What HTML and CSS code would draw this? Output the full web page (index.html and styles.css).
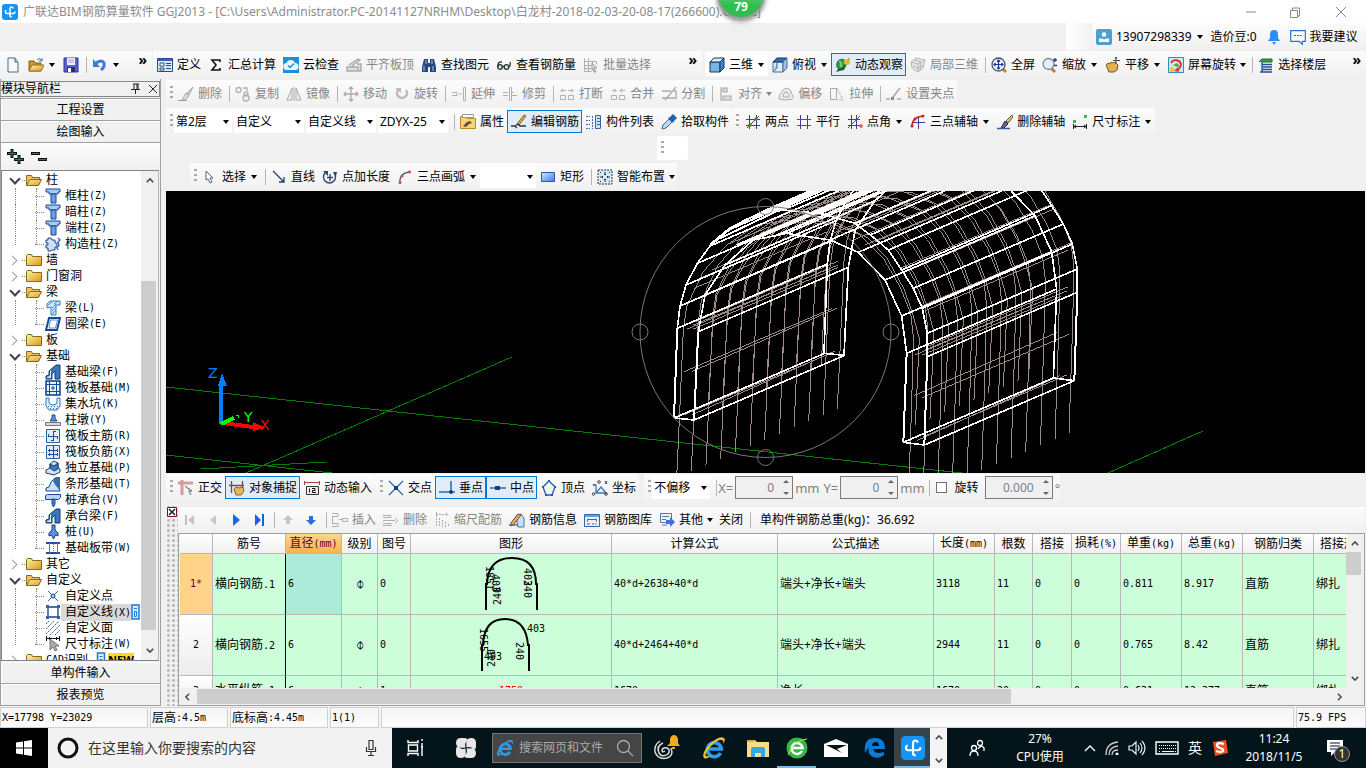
FILE: index.html
```html
<!DOCTYPE html>
<html lang="zh-CN">
<head>
<meta charset="utf-8">
<title>广联达BIM钢筋算量软件 GGJ2013</title>
<link rel="stylesheet" href="styles.css">
</head>
<body>
<svg class="sprite" aria-hidden="true">
<defs>
<linearGradient id="gy" x1="0" y1="0" x2="1" y2="1"><stop offset="0" stop-color="#fff3b0"/><stop offset="1" stop-color="#d99a1c"/></linearGradient>
<linearGradient id="gb" x1="0" y1="0" x2="1" y2="1"><stop offset="0" stop-color="#d4e6ff"/><stop offset="1" stop-color="#3f78e6"/></linearGradient>
</defs>
<symbol id="app" viewBox="0 0 16 16"><rect width="16" height="16" rx="3" fill="#1494f5"/><path d="M13 7.500q0 2-2 2H5q-1.700 0-1.700-1.700Q3.300 6.500 4.500 6.500M8 12.800V5Q8 3 9.700 3q1.300 0 1.300 1.500M8 11q0 2 1.800 2" fill="none" stroke="#fff" stroke-width="1.400"/></symbol>
<symbol id="new" viewBox="0 0 16 16"><path d="M3 1h7l3 4v10H3z" fill="#f6faff" stroke="#51667f"/><path d="M10 1v4h3" fill="#b9cbe0" stroke="#51667f"/></symbol>
<symbol id="open" viewBox="0 0 16 16"><path d="M1 14V4h5l1 2h6v8z" fill="#c9952c" stroke="#80611c"/><path d="M1 14l3-6h12l-3 6z" fill="url(#gy)" stroke="#94701e"/><path d="M9 3q3-3 5 1m0-3v3h-3" fill="none" stroke="#4a6f8c"/></symbol>
<symbol id="save" viewBox="0 0 16 16"><path d="M1 1h14v14H1z" fill="#5960d4" stroke="#2b328f"/><path d="M4 1h8v7H4z" fill="#f1f1ff"/><path d="M5 3h6M5 5h6" stroke="#9a9fd6"/><path d="M4 10h8v5H4z" fill="#28306d"/><path d="M5 11h3v4H5z" fill="#fff"/></symbol>
<symbol id="undo" viewBox="0 0 16 16"><path d="M4 6q6-4 8 0 1 4-3 7" fill="none" stroke="#3d7bd6" stroke-width="3"/><path d="M1 2v8h7z" fill="#3d7bd6"/></symbol>
<symbol id="define" viewBox="0 0 16 16"><path d="M.5 1.500h15v13H.5z" fill="#dbe8fb" stroke="#2b4a86"/><path d="M1 2h14v2H1z" fill="#3463b5"/><path d="M3 6h4v3H3zM3 11h4v2H3z" fill="#fff" stroke="#2b4a86"/><path d="M9 6.500h5M9 8.500h5M9 11.500h5" stroke="#2b4a86"/></symbol>
<symbol id="sigma" viewBox="0 0 16 16"><path d="M12 5V3H4l4 5-4 5h8v-2" fill="none" stroke="#111" stroke-width="1.600"/></symbol>
<symbol id="cloud" viewBox="0 0 16 16"><path d="M0 0h16v16H0z" fill="#1b8fd8"/><path d="M4 13a3.500 3.500 0 01-.5-7 4.500 4.500 0 018.500 0 3.500 3.500 0 010 7z" fill="#e9f7ff"/><path d="M5 8.500l2 2 4-4" fill="none" stroke="#1b8fd8" stroke-width="1.500"/></symbol>
<symbol id="slab" viewBox="0 0 16 16"><path d="M1 10h11v4H1zM3 8l9-6 2 1-8 6M11 7h4v7h-3" fill="#ddd" stroke="#aaa" stroke-width="1.400"/></symbol>
<symbol id="bino" viewBox="0 0 16 16"><path d="M3 2h4v4h2V2h4l2 8v5H9v-5H7v5H1v-5z" fill="#27477f"/><path d="M3 9v5M12 9v5M5 3v4M11 3v4" stroke="#9ec2ee"/></symbol>
<symbol id="glasses" viewBox="0 0 16 16"><g fill="#cfe3f5" stroke="#333" stroke-width="1.300"><circle cx="4" cy="10" r="2.300"/><circle cx="10.500" cy="10" r="2.300"/><path d="M6 9.500h2M1.500 10Q2 4 6 5M13 10q2-2 1-5" fill="none"/></g></symbol>
<symbol id="batch" viewBox="0 0 16 16"><path d="M1.500 1.500v13h7M1.500 4.500h12v3M1.500 8.500h7M1.500 11.500h7M5.500 1.500v13M9.500 4.500v4" fill="none" stroke="#b0b0b0"/><path d="M9 6l5 5h-3l2 4-2 0-1-3-1 1z" fill="#ddd" stroke="#999"/></symbol>
<symbol id="cube" viewBox="0 0 16 16"><path d="M1 5h10v10H1z" fill="#76b4e6" stroke="#18395f"/><path d="M1 5l4-4h10l-4 4z" fill="#d9edfb" stroke="#18395f"/><path d="M11 5l4-4v10l-4 4z" fill="#3f86c4" stroke="#18395f"/></symbol>
<symbol id="topv" viewBox="0 0 16 16"><path d="M1 5h10v10H1z" fill="#e2effa" stroke="#4b6b94"/><path d="M1 5l4-4h10l-4 4z" fill="#2f6fb8" stroke="#18395f"/><path d="M11 5l4-4v10l-4 4zM5 5v6l-4 4" fill="#9dc4ea" stroke="#4b6b94"/></symbol>
<symbol id="orbit" viewBox="0 0 16 16"><path d="M1 15Q8 3 15 1L9 13Q4 14 1 15z" fill="#245d39"/><ellipse cx="6" cy="7" rx="4" ry="5" transform="rotate(35 6 7)" fill="#33a14d" stroke="#176030"/><circle cx="12" cy="5" r="3" fill="#efb62c"/><path d="M4 4q3 1 2 6" stroke="#b9f1a8" fill="none"/></symbol>
<symbol id="part3" viewBox="0 0 16 16"><path d="M1 5l5-4 9 2-2 8-5 4-6-4zM1 5l7 2 7-4M8 7v8M4 3l7 2-1 8M3 9l6 2 5-3" fill="#e6e6e6" stroke="#b5b5b5"/></symbol>
<symbol id="full" viewBox="0 0 16 16"><path d="M11 11l4 4" stroke="#c1812c" stroke-width="3"/><circle cx="7.500" cy="7.500" r="6.500" fill="#edf4fc" stroke="#43536b" stroke-width="1.300"/><path d="M7.500 3v9M3 7.500h9M6 4.500L7.500 3 9 4.500M6 10.500L7.500 12 9 10.500M4.500 6L3 7.500 4.500 9M10.500 6L12 7.500 10.500 9" fill="none" stroke="#1f3a94" stroke-width="1.200"/></symbol>
<symbol id="zoom" viewBox="0 0 16 16"><path d="M9 11l4 4" stroke="#c1812c" stroke-width="3"/><circle cx="6.500" cy="7" r="5.500" fill="#dfeefa" stroke="#7c8795" stroke-width="1.300"/><path d="M13 1v4M11 3h4M12 8.500h3" stroke="#1f3a94" stroke-width="1.300"/></symbol>
<symbol id="pan" viewBox="0 0 16 16"><path d="M1 8l2-2 2 1 1-2 2 1 2-1 3 3-1 5-3 2H4z" fill="#e3b057" stroke="#7b5718"/><path d="M11 0v7M8 3.500h7M10 1.500L11 0l1 1.500" stroke="#444" fill="none"/></symbol>
<symbol id="rot" viewBox="0 0 16 16"><path d="M.5.500h15v15H.5z" fill="#c9ecf4" stroke="#2f8ec4"/><path d="M3 6a5.500 5.500 0 0110 1q0 4-4 6" fill="none" stroke="#e13030" stroke-width="1.800"/><path d="M6 14l4-4 1 5z" fill="#e13030"/><path d="M5 8l4-2 3 3-3 1z" fill="#55a843"/><circle cx="4" cy="12.500" r="2.500" fill="#f0c33a"/></symbol>
<symbol id="floor" viewBox="0 0 16 16"><path d="M1 5l3-3h10v3H4" fill="#3c9a45" stroke="#1c6c31"/><path d="M4 7.500h10M4 10h10M4 12.500h10M2 15h12M4 5v10" stroke="#1d4f96" stroke-width="1.300"/></symbol>
<symbol id="brushg" viewBox="0 0 16 16"><path d="M15 1L9 7l2 2z" fill="#ccc" stroke="#aaa"/><path d="M8 7l3 3-4 4H4z" fill="#ddd" stroke="#aaa"/><path d="M0 14.500h9" stroke="#999"/></symbol>
<symbol id="copy" viewBox="0 0 16 16"><g fill="none" stroke="#b0b0b0" stroke-width="1.300"><circle cx="3.500" cy="4" r="2.500"/><circle cx="11" cy="8" r="2"/><circle cx="11" cy="12" r="3"/><path d="M8 2h4v3"/></g></symbol>
<symbol id="mirror" viewBox="0 0 16 16"><path d="M6 2v12H1zM10 2v12h5z" fill="#eee" stroke="#aaa"/><path d="M8 1v14" stroke="#aaa"/></symbol>
<symbol id="move" viewBox="0 0 16 16"><path d="M8 1v14M1 8h14M6 3l2-2 2 2M6 13l2 2 2-2M3 6L1 8l2 2M13 6l2 2-2 2" fill="none" stroke="#aaa" stroke-width="1.300"/></symbol>
<symbol id="rotg" viewBox="0 0 16 16"><path d="M4 4a5 5 0 108 0" fill="none" stroke="#bbb" stroke-width="2.500"/><path d="M1 2h6v5z" fill="#bbb"/></symbol>
<symbol id="extend" viewBox="0 0 16 16"><path d="M1 6.500h5v3H1M8 8h3M12.500 1.500h2v13h-2z" fill="none" stroke="#b0b0b0"/></symbol>
<symbol id="trim" viewBox="0 0 16 16"><path d="M1 6.500h5M1 9.500h5M10 6.500h2M10 9.500h5M7.500 1v14M9.500 1v14" fill="none" stroke="#b0b0b0"/></symbol>
<symbol id="brk" viewBox="0 0 16 16"><path d="M1.500 9.500h5v4h-5zM9.500 9.500h5v4h-5zM2 4.500h5M4 2.500l-2 2 2 2M9 4.500h5M12 2.500l2 2-2 2" fill="none" stroke="#b0b0b0"/></symbol>
<symbol id="merge" viewBox="0 0 16 16"><path d="M1.500 9.500h5v4h-5zM9.500 9.500h5v4h-5zM2 4.500h4M4 2.500l2 2-2 2M10 4.500h5M12 2.500l-2 2 2 2" fill="none" stroke="#b0b0b0"/></symbol>
<symbol id="split" viewBox="0 0 16 16"><path d="M1 5h9M1 12h14V5h-2M15 1L4 14" fill="none" stroke="#aaa" stroke-width="1.300"/></symbol>
<symbol id="align" viewBox="0 0 16 16"><path d="M3 1v14M5 2h4v4H5zM5 10h8v4H5z" fill="#ddd" stroke="#aaa" stroke-width="1.200"/></symbol>
<symbol id="offset" viewBox="0 0 16 16"><path d="M1 13q0-5 3-7 2-5 7-3 3 2 2 4 4 4 1 6-6 2-13 0zM5 11q0-3 2-5h2q3 3 2 5z" fill="#eee" stroke="#aaa"/></symbol>
<symbol id="stretch" viewBox="0 0 16 16"><path d="M1.500 2.500h6v11h-6z" fill="none" stroke="#aaa"/><path d="M8 2l6 12H8" fill="none" stroke="#aaa" stroke-dasharray="2 1"/></symbol>
<symbol id="grip" viewBox="0 0 16 16"><path d="M0 13h4M11 13h4M14 2L7 11" stroke="#aaa" stroke-width="1.600"/><path d="M5 11h3v3H5z" fill="#888"/></symbol>
<symbol id="prop" viewBox="0 0 16 16"><path d="M.5 2.500h6l1 2h8v10H.5z" fill="#f8d377" stroke="#bd8a29"/><path d="M2.500.500h11v3h-11z" fill="#fff" stroke="#999"/><path d="M3 12l4-4 3-1 2 2-3 1-3 3z" fill="#5a5040"/></symbol>
<symbol id="edit" viewBox="0 0 16 16"><path d="M13 1l2 1-7 9-2-1z" fill="#e5ae54" stroke="#8c5428"/><path d="M0 12h4l3-2 2 2h6M4 12l2 2" fill="none" stroke="#333" stroke-width="1.300"/></symbol>
<symbol id="list" viewBox="0 0 16 16"><path d="M0 2.500h4M0 6.500h4M0 10.500h4M0 14.500h4M6.500 2v13" stroke="#3866a6" stroke-dasharray="2 1"/><path d="M9.500 1.500h5v13h-5z" fill="#cbdff5" stroke="#3866a6"/><path d="M11 4.500h3M11 7.500h3M11 10.500h3" stroke="#3866a6"/></symbol>
<symbol id="pick" viewBox="0 0 16 16"><path d="M1 15l1-4 6-6 3 3-6 6z" fill="#bcd8f2" stroke="#48678a"/><path d="M7 4l2-1 3-3 4 4-3 3-1 2z" fill="#2162ae"/></symbol>
<symbol id="two" viewBox="0 0 16 16"><path d="M4.500 1v14M11.500 1v14M1 5.500h14M1 11.500h14" stroke="#3e3e8e"/><path d="M2 14L14 2" stroke="#922"/><circle cx="5" cy="11" r="1.700" fill="#3a8c30"/><circle cx="11" cy="5" r="1.700" fill="#3a8c30"/></symbol>
<symbol id="par" viewBox="0 0 16 16"><path d="M4.500 1v14M11.500 1v14" stroke="#3e3e8e"/><path d="M1 5.500h14M1 11.500h14" stroke="#c23"/></symbol>
<symbol id="ang" viewBox="0 0 16 16"><path d="M4.500 1v14M9.500 1v14M1 5.500h12M1 11.500h12" stroke="#3e3e8e"/><path d="M1 14L13 2" stroke="#c22"/><circle cx="14" cy="12" r="1.300" fill="#fff" stroke="#c22"/></symbol>
<symbol id="aux3" viewBox="0 0 16 16"><path d="M8.500 3v12M3 8.500h12" stroke="#3e3e8e"/><path d="M2 12Q2 3 13 2" fill="none" stroke="#c22" stroke-width="1.400"/><g fill="#c22"><circle cx="2" cy="12" r="1.500"/><circle cx="5" cy="5" r="1.500"/><circle cx="13" cy="2" r="1.500"/></g></symbol>
<symbol id="brush" viewBox="0 0 16 16"><path d="M15 1L9 7l2 2 5-6z" fill="#e7c26b" stroke="#555"/><path d="M8 7l3 3-4 4H4z" fill="#765693" stroke="#333"/><path d="M0 14.500h13" stroke="#335b9e" stroke-width="1.500"/></symbol>
<symbol id="dim" viewBox="0 0 16 16"><path d="M1.500 10v5M14.500 10v5M2 12.500h12M4 11l-2 1.500 2 1.500M12 11l2 1.500-2 1.500" fill="none" stroke="#222"/><path d="M1 6h3v3H1zM12 1h3v3h-3z" fill="#4caf50"/></symbol>
<symbol id="cur" viewBox="0 0 16 16"><path d="M4 2v9l2-1 2 4 2-1-2-4h3z" fill="#fff" stroke="#4f6688"/></symbol>
<symbol id="line" viewBox="0 0 16 16"><path d="M2 2l11 11M13 8v5H8" fill="none" stroke="#1d3f72" stroke-width="1.300"/></symbol>
<symbol id="len" viewBox="0 0 16 16"><path d="M3 4a6 6 0 109 0M8 5v7M5 8.500h6" fill="none" stroke="#28456f" stroke-width="1.400"/><path d="M1 2h5v5M15 3l-4 0 3 4z" fill="#28456f"/></symbol>
<symbol id="arc" viewBox="0 0 16 16"><path d="M3 14Q2 4 13 3" fill="none" stroke="#36598f" stroke-width="1.300"/><g fill="#d94a3a"><circle cx="3" cy="13.500" r="1.500"/><circle cx="5" cy="7" r="1.500"/><circle cx="12.500" cy="3" r="1.500"/></g></symbol>
<symbol id="rect" viewBox="0 0 16 16"><path d="M1.500 3.500h13v9h-13z" fill="url(#gb)" stroke="#2a56b5"/></symbol>
<symbol id="smart" viewBox="0 0 16 16"><path d="M1 1h14v14H1z" fill="#d8e9f6" stroke="#333" stroke-dasharray="2 1"/><path d="M8 3v3M8 10v3M3 8h3M10 8h3M7 5l1 1 1-1M7 11l1-1 1 1M5 7l1 1-1 1M11 7l-1 1 1 1M3 3l1 1M13 3l-1 1M3 13l1-1M13 13l-1-1" fill="none" stroke="#234"/></symbol>
<symbol id="user" viewBox="0 0 16 16"><rect width="16" height="16" rx="2" fill="#4aa0cf"/><circle cx="8" cy="5.500" r="2.300" fill="#fff"/><path d="M3 13V9.500h3l2 1 2-1h3V13z" fill="#fff"/></symbol>
<symbol id="bell" viewBox="0 0 16 16"><path d="M2 12l2-3V5q0-4 4-4t4 4v4l2 3zM6 13h4l-2 3z" fill="#2f8cf0"/></symbol>
<symbol id="chat" viewBox="0 0 16 16"><path d="M.700 1.700h14.600v10.600h-3v3l-3-3H.700z" fill="#fff" stroke="#2b6ed2" stroke-width="1.200"/><path d="M4 6.500h8" stroke="#2b6ed2" stroke-dasharray="2 1"/></symbol>
<symbol id="ortho" viewBox="0 0 16 16"><path d="M0 3h15M4 0v15" stroke="#d89a9c" stroke-width="3"/><path d="M7 6l7 5-3 0 2 4" fill="#cdd5de" stroke="#667"/></symbol>
<symbol id="snap" viewBox="0 0 16 16"><path d="M2.500 1v12M13.500 1v7M0 5.500h15" stroke="#8a4141" stroke-width="1.300"/><path d="M5 9l2-2 3 1 4-1 1 4-3 4H7z" fill="#e5b75d" stroke="#86652a"/></symbol>
<symbol id="dyn" viewBox="0 0 16 16"><path d="M.5 1v4M15.500 1v4M0 2.500h16" stroke="#a44"/><path d="M2.500 6.500h12v8h-12z" fill="#eee" stroke="#333"/><path d="M5.500 8.500v4M8 8.500h3v2H8.500v2H12" fill="none" stroke="#111"/></symbol>
<symbol id="cross" viewBox="0 0 16 16"><path d="M1 1l14 14M15 1L1 15" stroke="#2d68b2" stroke-width="1.300"/><path d="M6 6h4v4H6z" fill="#143e79"/></symbol>
<symbol id="perp" viewBox="0 0 16 16"><path d="M0 12h16M12 1v11" stroke="#2d68b2" stroke-width="1.500"/><circle cx="12" cy="12" r="2" fill="#143e79"/></symbol>
<symbol id="mid" viewBox="0 0 16 16"><path d="M0 8h16" stroke="#2d68b2" stroke-width="1.500"/><path d="M5 6h5v4H5z" fill="#143e79"/></symbol>
<symbol id="vert" viewBox="0 0 16 16"><path d="M8 1l6 6-3 8H5L2 7z" fill="none" stroke="#1d5ca8" stroke-width="1.300"/><path d="M7 0h2v2H7zM1 6h2v2H1zM13 6h2v2h-2zM4 14h2v2H4zM10 14h2v2h-2z" fill="#1d5ca8"/></symbol>
<symbol id="coord" viewBox="0 0 16 16"><path d="M4 4v9h11M4 13l5-6 5 6" fill="none" stroke="#3378b9" stroke-width="1.300"/><g fill="none" stroke="#444"><circle cx="7" cy="2" r="1.300"/><circle cx="1.500" cy="14" r="1.300"/><circle cx="14" cy="14" r="1.300"/><path d="M1 4l1 2 1-2M13 4l2-3M13 1l2 3"/></g></symbol>
<symbol id="first" viewBox="0 0 16 16"><path d="M3 3h2v10H3zM12 3v10L6 8z" fill="#bfc3c8"/></symbol>
<symbol id="prev" viewBox="0 0 16 16"><path d="M11 3v10L5 8z" fill="#c5c8cc"/></symbol>
<symbol id="next" viewBox="0 0 16 16"><path d="M5 2v12l7-6z" fill="#1b67e0"/></symbol>
<symbol id="last" viewBox="0 0 16 16"><path d="M4 2v12l6-6zM11 2h2v12h-2z" fill="#1b62d6"/></symbol>
<symbol id="up" viewBox="0 0 16 16"><path d="M8 3l5 5h-3v4H6V8H3z" fill="#c3c5c8"/></symbol>
<symbol id="down" viewBox="0 0 16 16"><path d="M8 13l5-5h-3V4H6v4H3z" fill="#2c6be2"/></symbol>
<symbol id="ins" viewBox="0 0 16 16"><path d="M0 1.500h6v3H0M0 11.500h6v3H0M.5 4v7M7 7.500h3M10.500 6.500h5v3h-5z" fill="none" stroke="#b0b0b0"/></symbol>
<symbol id="del" viewBox="0 0 16 16"><path d="M0 3.500h8v2H0M0 11.500h8v2H0M0 8.500h12M12 6l3 2.500-3 2.500" fill="none" stroke="#b0b0b0"/></symbol>
<symbol id="scale" viewBox="0 0 16 16"><path d="M2 2.500h12M12 .5l2 2-2 2M2.500 0v15M5.500 6v9M8.500 8v7M11.500 10v5M14.500 12v3" fill="none" stroke="#aaa" stroke-dasharray="2 1"/></symbol>
<symbol id="info" viewBox="0 0 16 16"><path d="M0 13h10" fill="none" stroke="#4272a8" stroke-width="1.500"/><path d="M7 4l5-2 3 4v9H9z" fill="#cbe0f5" stroke="#4272a8"/><path d="M2 11l7-9 3 1-7 9-3 2z" fill="#e5b35e" stroke="#813d2b"/></symbol>
<symbol id="lib" viewBox="0 0 16 16"><path d="M.5 2.500h15v12H.5z" fill="#e7f0fb" stroke="#3766a5"/><path d="M1 3h14v2H1z" fill="#6a99d6"/><path d="M3.500 9.500v-2h9v2M3 12h3M8 12h2" fill="none" stroke="#3766a5"/><path d="M11 12h2" stroke="#dc5a3a"/></symbol>
<symbol id="other" viewBox="0 0 16 16"><path d="M1.500 1.500h11v9h-11z" fill="#eef4fd" stroke="#5579a8"/><path d="M3 4.500h7M3 7.500h4M3 13h5" stroke="#5579a8"/><path d="M7 8h4V5l5 5-5 5v-3H7z" fill="#3e74da"/></symbol>
<symbol id="fo" viewBox="0 0 16 16"><path d="M.5 13.500V3.500h5l1 2h7v2" fill="#f3c457" stroke="#8d6716"/><path d="M.5 13.500l3.500-6h11.500l-3 6z" fill="url(#gy)" stroke="#8d6716"/></symbol>
<symbol id="fc" viewBox="0 0 16 16"><path d="M.5 13.500V3.500l1-1h4l1 2h9v9z" fill="url(#gy)" stroke="#8d6716"/></symbol>
<symbol id="col" viewBox="0 0 16 16"><path d="M1 1h14v3h-2v2H4V4H1z" fill="#a9c9f1" stroke="#184792"/><path d="M6 6h5v9H6z" fill="#67a0e5" stroke="#184792"/></symbol>
<symbol id="gear" viewBox="0 0 16 16"><path d="M3 2h3l1 2h3v3h2v4h-2v3H7l-1 1H3v-3H1V9h2V7H1V4h2z" fill="#cce0f8" stroke="#184792"/><path d="M13 2l2 2-2 2 1 3-2 3 1 2" fill="none" stroke="#4272b8" stroke-width="1.500"/></symbol>
<symbol id="beam" viewBox="0 0 16 16"><path d="M2 4l3-3h10v4h-4v10H6V7L2 8z" fill="#cfe4fb" stroke="#2f7cc8"/><path d="M7 8l4-4M7 11l4-4M7 14l4-4M3 5l4-3M9 4l4-3" stroke="#4d8ad0"/></symbol>
<symbol id="ring" viewBox="0 0 16 16"><path d="M4 2h11l-3 12H1z" fill="none" stroke="#184792" stroke-width="2"/><path d="M5.500 4h7l-2 8H4z" fill="#fff" stroke="#5990d9"/></symbol>
<symbol id="fb" viewBox="0 0 16 16"><path d="M1 15v-3l3-1V7l7-6h4v14h-5V7L7 10v5z" fill="#3d76b8" stroke="#123a6d"/><path d="M2 14v-1l3-1V7l1-1v8z" fill="#d5e9fb"/></symbol>
<symbol id="raft" viewBox="0 0 16 16"><path d="M1 1h14v14H1z" fill="#e6f0fd" stroke="#0d3d7e" stroke-width="1.500"/><path d="M4.500 4.500h7v7h-7zM1 4.500h14M1 11.500h14M4.500 1v14M11.500 1v14M7 7h2v2H7z" fill="none" stroke="#194b92"/></symbol>
<symbol id="pit" viewBox="0 0 16 16"><path d="M1 2h3v4q0 3 4 3t4-3V2h3v8l-3 4H4L1 10z" fill="#dfeefd" stroke="#3a72b8"/><path d="M3 10.500h10M5 12.500h7" stroke="#3a72b8" stroke-dasharray="1 2"/></symbol>
<symbol id="pier" viewBox="0 0 16 16"><path d="M.5 10.500h15v3H.5z" fill="#d9d9d9" stroke="#777"/><path d="M7 3h3v3l2 3H5l2-3z" fill="#5d95dd" stroke="#184792"/></symbol>
<symbol id="mainr" viewBox="0 0 16 16"><path d="M1.500 1.500h13v13h-13z" fill="#dceafb" stroke="#2a5fae"/><path d="M8.500 4v8M3.500 8.500h9M3.500 9V6M12.500 8v3M8 3.500h3M6 12.500h3" fill="none" stroke="#1c4c9a"/></symbol>
<symbol id="negr" viewBox="0 0 16 16"><path d="M1.500 1.500h13v13h-13z" fill="#dceafb" stroke="#2a5fae"/><path d="M8.500 2v12M3 6.500h10M3 10.500h10M4.500 5v3M12.500 5v3M4.500 9v3M12.500 9v3" fill="none" stroke="#1c4c9a"/></symbol>
<symbol id="iso" viewBox="0 0 16 16"><path d="M1 10l4-2V4l4-3 4 2v5l2 1v3l-6 3-8-2z" fill="#cde2fa" stroke="#18406f"/><path d="M5 4l4 2 4-3v6L9 11 5 8z" fill="#3f78b8" stroke="#18406f"/></symbol>
<symbol id="strip" viewBox="0 0 16 16"><path d="M1 15v-3l3-1 2-5 4-4h4v10l1 3z" fill="#c9e1fa" stroke="#174d91"/><path d="M8 5l3-4h4v13l-4-4z" fill="#356da8"/></symbol>
<symbol id="cap" viewBox="0 0 16 16"><path d="M.5 3.500l2-1h13v3l-2 2H.5z" fill="#b9d6f8" stroke="#184792"/><path d="M7 7h3v5l-1.500 3L7 12z" fill="#427fc8" stroke="#184792"/></symbol>
<symbol id="pile" viewBox="0 0 16 16"><path d="M7 1h3v5l3 3v3l-2-1-1 1-1.500 3L7 12l-1-1-2 1V9l3-3z" fill="#5593df" stroke="#153d78"/></symbol>
<symbol id="band" viewBox="0 0 16 16"><path d="M1 3h14M1 13h14" stroke="#1d4fa2" stroke-width="2"/><path d="M4.500 3v10M12.500 3v10" stroke="#4f7fc9"/><path d="M8.500 4v8" stroke="#4f7fc9" stroke-dasharray="1 1"/></symbol>
<symbol id="pt" viewBox="0 0 16 16"><path d="M3 3l10 10M13 3L3 13" stroke="#2a62b8"/><circle cx="8" cy="8" r="2" fill="#a9d0ef" stroke="#123f83"/></symbol>
<symbol id="poly" viewBox="0 0 16 16"><path d="M3 3h10v10H3z" fill="none" stroke="#173e88" stroke-width="1.300"/><path d="M1 1h3v3H1zM12 1h3v3h-3zM1 12h3v3H1zM12 12h3v3h-3z" fill="#2c62b7"/></symbol>
<symbol id="hatch" viewBox="0 0 16 16"><path d="M1 4l3-3M1 9l8-8M1 14L14 1M5 15L15 5M10 15l5-5" stroke="#2b58a8" stroke-dasharray="2 1"/></symbol>
<symbol id="dimc" viewBox="0 0 16 16"><path d="M1.500 0v5M14.500 0v5M2 2.500h12M4.500 1v3M11.500 1v3" stroke="#111" fill="none"/><path d="M5 3v11l3-3 2 4 2-1-2-4h4z" fill="#aaa" stroke="#777"/></symbol>
<symbol id="book" viewBox="0 0 9 16"><path d="M1 1h7v14H1z" fill="#d7edff" stroke="#1c78d2" stroke-width="1.500"/><path d="M3 4.500h3M3.500 7.500h2v5h-2z" fill="none" stroke="#1c78d2"/></symbol>
<symbol id="ie" viewBox="0 0 24 24"><path d="M18.500 17a7 7 0 11.800-4H7" fill="none" stroke="#2d9be8" stroke-width="3.600"/><path d="M2 22Q-1 18 7 9 17-1 22 2q2 2-1 6 1-4-1-4-5-1-12 7-6 8-4 9 2 1 6-1-6 5-8 3z" fill="#f1bd3a"/></symbol>
<symbol id="ieb" viewBox="0 0 24 24"><path d="M18.500 17a7 7 0 11.800-4H7" fill="none" stroke="#2d9be8" stroke-width="3.600"/><path d="M2 22Q-1 18 7 9 17-1 22 2q2 2-1 6 1-4-1-4-5-1-12 7-6 8-4 9 2 1 6-1-6 5-8 3z" fill="#2d9be8"/></symbol>
</svg>

<header class="title">
<svg class="i"><use href="#app"/></svg><h1>广联达BIM钢筋算量软件 GGJ2013 - [C:\Users\Administrator.PC-20141127NRHM\Desktop\白龙村-2018-02-03-20-08-17(266600).GGJ12]</h1>
<span class="ball">79</span>
<svg class="wins" viewBox="0 0 120 20"><path d="M8 10h10M52.500 8.500h7v7h-7zM54.500 8v-2h7v8h-2M98 5l10 10M108 5L98 15" fill="none" stroke="#888"/></svg>
</header>
<div class="menurow">
<div class="bar blank"></div>
<div class="bar account"><button><svg class="i"><use href="#user"/></svg>13907298339<i class="ar wide"></i></button><button>造价豆:0</button><button class="bellb" aria-label="通知"><svg class="i"><use href="#bell"/></svg></button><button><svg class="i"><use href="#chat"/></svg>我要建议</button></div>
</div>
<div class="row top">
<div class="bar std"><button aria-label="新建"><svg class="i"><use href="#new"/></svg></button><button aria-label="打开"><svg class="i"><use href="#open"/></svg><i class="ar wide"></i></button><button aria-label="保存"><svg class="i"><use href="#save"/></svg></button><i class="sep"></i><button aria-label="撤销"><svg class="i"><use href="#undo"/></svg><i class="ar wide"></i></button><b class="more">»</b></div>
<div class="bar calc"><button><svg class="i"><use href="#define"/></svg>定义</button><button><svg class="i"><use href="#sigma"/></svg>汇总计算</button><button><svg class="i"><use href="#cloud"/></svg>云检查</button><button disabled><svg class="i"><use href="#slab"/></svg>平齐板顶</button><button><svg class="i"><use href="#bino"/></svg>查找图元</button><button><svg class="i"><use href="#glasses"/></svg>查看钢筋量</button><button disabled><svg class="i"><use href="#batch"/></svg>批量选择</button><b class="more">»</b></div>
<div class="bar view"><span class="field"><button><svg class="i"><use href="#cube"/></svg>三维<i class="ar wide"></i></button></span><button><svg class="i"><use href="#topv"/></svg>俯视<i class="ar wide"></i></button><button class="on"><svg class="i"><use href="#orbit"/></svg>动态观察</button><button disabled><svg class="i"><use href="#part3"/></svg>局部三维</button><i class="sep"></i><button><svg class="i"><use href="#full"/></svg>全屏</button><button><svg class="i"><use href="#zoom"/></svg>缩放<i class="ar wide"></i></button><button><svg class="i"><use href="#pan"/></svg>平移<i class="ar wide"></i></button><button><svg class="i"><use href="#rot"/></svg>屏幕旋转<i class="ar"></i></button><i class="sep"></i><button><svg class="i"><use href="#floor"/></svg>选择楼层</button><b class="more">»</b></div>
</div>

<main>
<aside>
<div class="phead"><h2>模块导航栏</h2><svg viewBox="0 0 30 14"><path d="M4 2h6M5 2v5M9 2v5M8 2v5M2 7.500h9M6.500 7v5M20 3l8 8M28 3l-8 8" fill="none" stroke="#222"/></svg></div>
<button class="nav">工程设置</button><button class="nav">绘图输入</button>
<div class="ptools"><svg viewBox="0 0 44 20"><path d="M7 2v9M2 6.500h10M14 8v9M9 12.500h10" stroke="#111" stroke-width="3"/><path d="M7 3v7M3 6.500h8M14 9v7M10 12.500h8" stroke="#0d8583"/><path d="M26 6.500h9M33 12.500h9" stroke="#111" stroke-width="3"/><path d="M27 6.500h7M34 12.500h7" stroke="#0d8583"/></svg></div>
<div class="treebox">
<ul class="tree">
<li class="g o"><svg class="i"><use href="#fo"/></svg>柱</li>
<li><svg class="i"><use href="#col"/></svg>框柱<span class="m">(Z)</span></li>
<li><svg class="i"><use href="#col"/></svg>暗柱<span class="m">(Z)</span></li>
<li><svg class="i"><use href="#col"/></svg>端柱<span class="m">(Z)</span></li>
<li class="end"><svg class="i"><use href="#gear"/></svg>构造柱<span class="m">(Z)</span></li>
<li class="g"><svg class="i"><use href="#fc"/></svg>墙</li>
<li class="g"><svg class="i"><use href="#fc"/></svg>门窗洞</li>
<li class="g o"><svg class="i"><use href="#fo"/></svg>梁</li>
<li><svg class="i"><use href="#beam"/></svg>梁<span class="m">(L)</span></li>
<li class="end"><svg class="i"><use href="#ring"/></svg>圈梁<span class="m">(E)</span></li>
<li class="g"><svg class="i"><use href="#fc"/></svg>板</li>
<li class="g o"><svg class="i"><use href="#fo"/></svg>基础</li>
<li><svg class="i"><use href="#fb"/></svg>基础梁<span class="m">(F)</span></li>
<li><svg class="i"><use href="#raft"/></svg>筏板基础<span class="m">(M)</span></li>
<li><svg class="i"><use href="#pit"/></svg>集水坑<span class="m">(K)</span></li>
<li><svg class="i"><use href="#pier"/></svg>柱墩<span class="m">(Y)</span></li>
<li><svg class="i"><use href="#mainr"/></svg>筏板主筋<span class="m">(R)</span></li>
<li><svg class="i"><use href="#negr"/></svg>筏板负筋<span class="m">(X)</span></li>
<li><svg class="i"><use href="#iso"/></svg>独立基础<span class="m">(P)</span></li>
<li><svg class="i"><use href="#strip"/></svg>条形基础<span class="m">(T)</span></li>
<li><svg class="i"><use href="#cap"/></svg>桩承台<span class="m">(V)</span></li>
<li><svg class="i"><use href="#fb"/></svg>承台梁<span class="m">(F)</span></li>
<li><svg class="i"><use href="#pile"/></svg>桩<span class="m">(U)</span></li>
<li class="end"><svg class="i"><use href="#band"/></svg>基础板带<span class="m">(W)</span></li>
<li class="g"><svg class="i"><use href="#fc"/></svg>其它</li>
<li class="g o"><svg class="i"><use href="#fo"/></svg>自定义</li>
<li><svg class="i"><use href="#pt"/></svg>自定义点</li>
<li class="sel"><svg class="i"><use href="#poly"/></svg><span class="lab">自定义线<span class="m">(X)</span></span><svg class="bk"><use href="#book"/></svg></li>
<li><svg class="i"><use href="#hatch"/></svg>自定义面</li>
<li class="end"><svg class="i"><use href="#dimc"/></svg>尺寸标注<span class="m">(W)</span></li>
<li class="g"><svg class="i"><use href="#fc"/></svg><span class="m">CAD</span>识别<svg class="bk cadbk"><use href="#book"/></svg><b class="newtag">NEW</b></li>
</ul>
<div class="vs"><svg viewBox="0 0 10 6"><path d="M1 5l4-4 4 4"/></svg><i class="thumb"></i><svg viewBox="0 0 10 6"><path d="M1 1l4 4 4-4"/></svg></div>
</div>
<button class="nav">单构件输入</button><button class="nav">报表预览</button>
</aside>

<section class="work">
<div class="row"><div class="bar"><i class="hd"></i><button disabled><svg class="i"><use href="#brushg"/></svg>删除</button><i class="sep"></i><button disabled><svg class="i"><use href="#copy"/></svg>复制</button><button disabled><svg class="i"><use href="#mirror"/></svg>镜像</button><i class="sep"></i><button disabled><svg class="i"><use href="#move"/></svg>移动</button><button disabled><svg class="i"><use href="#rotg"/></svg>旋转</button><i class="sep"></i><button disabled><svg class="i"><use href="#extend"/></svg>延伸</button><button disabled><svg class="i"><use href="#trim"/></svg>修剪</button><i class="sep"></i><button disabled><svg class="i"><use href="#brk"/></svg>打断</button><button disabled><svg class="i"><use href="#merge"/></svg>合并</button><button disabled><svg class="i"><use href="#split"/></svg>分割</button><i class="sep"></i><button disabled><svg class="i"><use href="#align"/></svg>对齐<i class="ar"></i></button><button disabled><svg class="i"><use href="#offset"/></svg>偏移</button><button disabled><svg class="i"><use href="#stretch"/></svg>拉伸</button><i class="sep"></i><button disabled><svg class="i"><use href="#grip"/></svg>设置夹点</button></div></div>
<div class="row"><div class="bar"><i class="hd"></i><label class="combo c58"><select aria-label="楼层"><option>第2层</option></select></label><label class="combo"><select aria-label="构件类型"><option>自定义</option></select></label><label class="combo"><select aria-label="构件"><option>自定义线</option></select></label><label class="combo"><select aria-label="名称"><option>ZDYX-25</option></select></label><i class="sep"></i><button><svg class="i"><use href="#prop"/></svg>属性</button><button class="on"><svg class="i"><use href="#edit"/></svg>编辑钢筋</button><button><svg class="i"><use href="#list"/></svg>构件列表</button><button><svg class="i"><use href="#pick"/></svg>拾取构件</button></div><div class="bar"><i class="hd axis"></i><button><svg class="i"><use href="#two"/></svg>两点</button><button><svg class="i"><use href="#par"/></svg>平行</button><button><svg class="i"><use href="#ang"/></svg>点角<i class="ar wide"></i></button><button><svg class="i"><use href="#aux3"/></svg>三点辅轴<i class="ar wide"></i></button><button><svg class="i"><use href="#brush"/></svg>删除辅轴</button><button><svg class="i"><use href="#dim"/></svg>尺寸标注<i class="ar wide"></i></button></div></div>
<div class="row"><div class="bar mini"><i class="hd"></i></div></div>
<div class="row last"><div class="bar draw"><i class="hd"></i><button><svg class="i"><use href="#cur"/></svg>选择<i class="ar wide"></i></button><i class="sep"></i><button><svg class="i"><use href="#line"/></svg>直线</button><button><svg class="i"><use href="#len"/></svg>点加长度</button><button><svg class="i"><use href="#arc"/></svg>三点画弧<i class="ar wide"></i></button><label class="combo c55"><select aria-label="画弧方式"><option></option></select></label><button><svg class="i"><use href="#rect"/></svg>矩形</button><i class="sep"></i><button><svg class="i"><use href="#smart"/></svg>智能布置<i class="ar"></i></button></div></div>

<svg class="scene" viewBox="166 191 1199 282" role="img" aria-label="三维视图">
<g stroke="#008000" fill="none" shape-rendering="crispEdges"><path d="M166 387L962 473M246 473L512 357M166 455L332 473M201 469L326 462M1108 473L1203 431"/></g>
<g fill="none" shape-rendering="crispEdges" transform="translate(620 190) scale(.33333)">
<g stroke="#9c8b85" stroke-width="3">
<defs>
<path id="bar1" d="M170 862L178 690 190 420 200 350 250 245 320 165 410 105 500 90 620 95 720 135 790 205 840 290 872 370 880 440 875 640 865 935"/>
<path id="bar2" d="M228 690L232 600 242 420 255 330 290 262 345 190 420 130 500 112 620 117 710 160 765 220 815 310 840 380 862 460 850 720"/>
</defs>
<use href="#bar1"/><use href="#bar1" x="44" y="-19"/><use href="#bar1" x="88" y="-38"/><use href="#bar1" x="132" y="-56"/><use href="#bar1" x="176" y="-75"/><use href="#bar1" x="220" y="-94"/><use href="#bar1" x="264" y="-113"/><use href="#bar1" x="308" y="-131"/><use href="#bar1" x="352" y="-150"/><use href="#bar1" x="396" y="-169"/><use href="#bar1" x="440" y="-188"/><use href="#bar1" x="482" y="-206"/>
<use href="#bar2" x="36" y="-15"/><use href="#bar2" x="80" y="-34"/><use href="#bar2" x="124" y="-53"/><use href="#bar2" x="168" y="-72"/><use href="#bar2" x="212" y="-91"/><use href="#bar2" x="256" y="-110"/><use href="#bar2" x="300" y="-129"/><use href="#bar2" x="344" y="-148"/><use href="#bar2" x="376" y="-162"/>
<path d="M192 545l445-190M215 545l435-190M200 418l420-180M218 418l437-186M220 405l435-180M225 395l430-182M190 675l430-180M215 675l430-192M222 295l400-170M275 240l500-213M240 265l450-192M330 160l450-190M420 130l450-190M450 105l400-170M520 90l400-170M560 100l450-190M620 97l450-190M640 130l450-190M680 120l450-190M700 150l450-190M735 165l450-190M765 155l450-190M840 235l450-190M850 248l450-190M905 348l450-190M915 362l430-182M885 495l450-190M907 495l415-175M915 480l425-177M920 470l425-180M882 617l430-190M907 623l440-190M890 752l430-195M910 740l430-185"/>
</g>
<g stroke="#fff" stroke-width="5">
<defs>
<path id="outer" d="M162 684L172 415 180 348 198 285 232 220 270 168 330 118 400 78 490 60 600 70 705 100 760 142 805 180 845 240 880 295 907 355 922 430 922 500 913 765"/>
<path id="inner" d="M222 690L235 425 255 315 315 225 400 150 500 130 630 150 715 187 795 270 845 378 860 490 850 757"/>
</defs>
<use href="#outer"/><use href="#inner"/><use href="#outer" x="450" y="-193"/><use href="#inner" x="450" y="-193"/>
<path stroke-width="6" d="M162 684L172 415M222 690L235 425M860 490L850 757M922 500L913 765M1372 307L1363 572"/>
<path d="M162 684l60 6M612 490l61 6M850 757l63 8M1300 564l63 8M162 684l450-193M222 690l450-193M172 415l450-193M235 425l450-193M180 348l450-193M198 285l450-193M232 220l450-193M255 315l375-162M270 168l450-193M315 225l450-193M330 118l450-193M400 78l450-193M400 150l450-193M490 60l450-193M500 130l450-193M600 70l450-193M630 150l450-193M705 100l450-193M715 187l450-193M750 135l450-193M795 270l450-193M805 180l450-193M845 240l450-193M845 378l450-193M860 490l450-193M880 295l450-193M907 355l450-193M922 430l450-193M922 500l450-193M850 757l450-193M913 765l450-193"/>
<path d="M270 164L330 114 430 64 590-6M330 118L610-6M365 95L640-24M405 84L640-18M430 74L680-36M470 62L700-40M300 145L540 30M350 165L720 6M405 145L780-18M460 140L780 4" stroke-width="6"/>
</g>
</g>
<g fill="none" stroke="#777"><circle cx="765.500" cy="332" r="125.500"/><circle cx="765.500" cy="206.500" r="8"/><circle cx="640" cy="332" r="8"/><circle cx="891" cy="332" r="8"/><circle cx="765.500" cy="457.500" r="8"/></g>
<g fill="none" shape-rendering="crispEdges"><path d="M221 424V386" stroke="#0080ff" stroke-width="4"/><path d="M222 373l5 13h-9z" fill="#0080ff"/><path d="M222 423l31 4" stroke="red" stroke-width="4"/><path d="M253 422l13 6-13 3z" fill="red"/><path d="M221 424l13-6" stroke="#0f0" stroke-width="4"/><path d="M236 415h2v3" stroke="#0f0"/></g>
<g class="axes"><text x="208" y="378" fill="#0080ff">Z</text><text x="244" y="422" fill="#0f0">Y</text><text x="260" y="430" fill="#f00">X</text></g>
</svg>

<div class="row snapbar"><div class="bar"><i class="hd"></i><button><svg class="i"><use href="#ortho"/></svg>正交</button><button class="on"><svg class="i"><use href="#snap"/></svg>对象捕捉</button><button><svg class="i"><use href="#dyn"/></svg>动态输入</button></div><div class="bar"><i class="hd s2"></i><button><svg class="i"><use href="#cross"/></svg>交点</button><button class="on"><svg class="i"><use href="#perp"/></svg>垂点</button><button class="on"><svg class="i"><use href="#mid"/></svg>中点</button><button><svg class="i"><use href="#vert"/></svg>顶点</button><button><svg class="i"><use href="#coord"/></svg>坐标</button></div><div class="bar offs"><i class="hd"></i><label class="combo c58"><select aria-label="偏移方式"><option>不偏移</option></select></label><i class="sep"></i><label class="num">X=<input value="0" disabled><span class="spin"></span>mm</label><label class="num">Y=<input value="0" disabled><span class="spin"></span>mm</label><i class="sep"></i><label class="chk"><input type="checkbox">旋转</label><label class="num deg"><input aria-label="角度" value="0.000" disabled><span class="spin"></span>°</label></div></div>

<div class="detail">
<div class="grip"><svg viewBox="0 0 10 10"><path d="M.5.500h9v9h-9z" fill="#fff" stroke="#712"/><path d="M2 2l6 6M8 2L2 8" stroke="#222" stroke-width="1.500"/></svg></div>
<div class="dmain">
<div class="bar dtools"><button disabled aria-label="首行"><svg class="i"><use href="#first"/></svg></button><button disabled aria-label="上一行"><svg class="i"><use href="#prev"/></svg></button><button aria-label="下一行"><svg class="i"><use href="#next"/></svg></button><button aria-label="末行"><svg class="i"><use href="#last"/></svg></button><i class="sep"></i><button disabled aria-label="上移"><svg class="i"><use href="#up"/></svg></button><button aria-label="下移"><svg class="i"><use href="#down"/></svg></button><i class="sep"></i><button disabled><svg class="i"><use href="#ins"/></svg>插入</button><button disabled><svg class="i"><use href="#del"/></svg>删除</button><button disabled><svg class="i"><use href="#scale"/></svg>缩尺配筋</button><button><svg class="i"><use href="#info"/></svg>钢筋信息</button><button><svg class="i"><use href="#lib"/></svg>钢筋图库</button><button><svg class="i"><use href="#other"/></svg>其他<i class="ar"></i></button><button>关闭</button><i class="sep"></i><span class="total">单构件钢筋总重(kg)：36.692</span></div>
<div class="grid">
<div class="gbody">
<table>
<colgroup><col class="w33"><col class="w73"><col class="w56"><col class="w36"><col class="w33"><col class="w201"><col class="w166"><col class="w156"><col class="w61"><col class="w38"><col class="w39"><col class="w49"><col class="w61"><col class="w61"><col class="w71"><col class="w61"></colgroup>
<thead><tr><th></th><th>筋号</th><th class="hot">直径<span class="m">(mm)</span></th><th>级别</th><th>图号</th><th>图形</th><th>计算公式</th><th>公式描述</th><th>长度<span class="m">(mm)</span></th><th>根数</th><th>搭接</th><th>损耗<span class="m">(%)</span></th><th>单重<span class="m">(kg)</span></th><th>总重<span class="m">(kg)</span></th><th>钢筋归类</th><th>搭接形式</th></tr></thead>
<tbody>
<tr><th class="hot m" scope="row">1*</th><td class="k">横向钢筋<span class="m">.1</span></td><td class="act m">6</td><td class="c">⌽</td><td class="m">0</td><td class="fig"><svg viewBox="0 0 200 60"><path d="M75 56V30h1q1-26 25-26t24 26h1v26" fill="none" stroke="#000" stroke-width="2"/><g><text transform="translate(75 12) rotate(90)">1851</text><text transform="translate(81 20) rotate(90)">403</text><text transform="translate(90 51) rotate(-90)">240</text><text transform="translate(113 14) rotate(90)">403</text><text transform="translate(113 26) rotate(90)">240</text></g></svg></td><td class="m">40*d+2638+40*d</td><td>端头+净长+端头</td><td class="m">3118</td><td class="m">11</td><td class="m">0</td><td class="m">0</td><td class="m">0.811</td><td class="m">8.917</td><td>直筋</td><td>绑扎</td></tr>
<tr><th class="m" scope="row">2</th><td class="k">横向钢筋<span class="m">.2</span></td><td class="m">6</td><td class="c">⌽</td><td class="m">0</td><td class="fig"><svg viewBox="0 0 200 60"><path d="M71 56V30h1q1-26 22-26t23 26h1v26" fill="none" stroke="#000" stroke-width="2"/><g><text transform="translate(69 13) rotate(90)">1655</text><text x="116" y="17">403</text><text x="73" y="45">403</text><text transform="translate(84 52) rotate(-90)">240</text><text transform="translate(105 27) rotate(90)">240</text></g></svg></td><td class="m">40*d+2464+40*d</td><td>端头+净长+端头</td><td class="m">2944</td><td class="m">11</td><td class="m">0</td><td class="m">0</td><td class="m">0.765</td><td class="m">8.42</td><td>直筋</td><td>绑扎</td></tr>
<tr class="short"><th class="m" scope="row">3</th><td class="k">水平纵筋<span class="m">.1</span></td><td class="m">6</td><td class="c">⌽</td><td class="m">1</td><td class="m red">1750</td><td class="m">1670</td><td>净长</td><td class="m">1670</td><td class="m">20</td><td class="m">0</td><td class="m">0</td><td class="m">0.631</td><td class="m">12.377</td><td>直筋</td><td>绑扎</td></tr>
</tbody>
</table>
<div class="vs"><svg viewBox="0 0 10 6"><path d="M1 5l4-4 4 4"/></svg><i class="thumb t2"></i><svg viewBox="0 0 10 6"><path d="M1 1l4 4 4-4"/></svg></div>
</div>
<div class="hs"><svg viewBox="0 0 6 10"><path d="M5 1L1 5l4 4"/></svg><i></i><svg viewBox="0 0 6 10"><path d="M1 1l4 4-4 4"/></svg></div>
</div>
</div>
</div>
</section>
</main>

<footer class="status"><span class="m s1">X=17798 Y=23029</span><span class="s2c">层高<span class="m">:4.5m</span></span><span class="s3">底标高<span class="m">:4.45m</span></span><span class="m s4">1(1)</span><span class="s5"></span><span class="m s6">75.9 FPS</span></footer>

<nav class="task">
<button class="start" aria-label="开始"><svg viewBox="0 0 16 16"><path d="M0 2.500l7-1v6H0zM8 1.300L16 0v7.500H8zM0 8.500h7v6l-7-1zM8 8.500h8V16l-8-1.300z" fill="#fff"/></svg></button>
<label class="cortana"><svg viewBox="0 0 22 22"><circle cx="11" cy="11" r="9" fill="none" stroke="#111" stroke-width="3"/></svg><input placeholder="在这里输入你要搜索的内容" aria-label="搜索"><svg class="mic" viewBox="0 0 12 18"><path d="M4 1.500h4v9H4zM1.500 8v4.500h9V8M6 13v4M3 16.500h6" fill="none" stroke="#333" stroke-width="1.200"/></svg></label>
<button class="t48" aria-label="任务视图"><svg viewBox="0 0 18 18"><path d="M1 1v2.500h10V1M1.500 6h9v6h-9zM1 17v-2.500h10V17M15 4v13M15 0v2M14 8h2" fill="none" stroke="#fff" stroke-width="1.400"/></svg></button>
<button class="t53" aria-label="风车"><svg viewBox="0 0 22 22"><g fill="#e8e8e8"><path id="blade" d="M10.500 10.500Q1 12 1 6q0-5 5-5h3q4 0 4 3-4 1-2.500 6.500z"/><use href="#blade" transform="rotate(90 11 11)"/><use href="#blade" transform="rotate(180 11 11)"/><use href="#blade" transform="rotate(270 11 11)"/></g></svg></button>
<label class="qs"><svg viewBox="0 0 24 24"><use href="#ieb"/></svg><input placeholder="搜索网页和文件" aria-label="搜索网页和文件"><svg viewBox="0 0 18 18"><path d="M12 12l5 5" stroke="#aaa" stroke-width="1.300"/><circle cx="7.500" cy="7.500" r="6" fill="none" stroke="#aaa" stroke-width="1.300"/></svg></label>
<button class="t48" aria-label="提醒"><svg class="s28" viewBox="0 0 28 28"><path d="M13 17q-3 2-3-1 1-3 5-2 4 2 1 6-6 4-9-1-3-7 4-10M19 14q3 8-4 10-9 2-12-6-1-7 5-11" fill="none" stroke="#ddd" stroke-width="1.500"/><path d="M15 12l3-3V5q1-4 4-4t4 4v4l2 3zM20 13h3v2h-3z" fill="#edae17"/></svg></button>
<button class="t48" aria-label="Internet Explorer"><svg class="s24" viewBox="0 0 24 24"><use href="#ie"/></svg></button>
<button class="t39" aria-label="文件资源管理器"><svg class="s22" viewBox="0 0 22 22"><path d="M0 3h8l2 2h12v15H0z" fill="#f9dc86"/><path d="M0 3h8v2H0z" fill="#e7b03d"/><path d="M4 20v-8q0-2 2-2h10q2 0 2 2v8h-4v-4H8v4z" fill="#36a7e6"/></svg></button>
<button class="t39 run" aria-label="浏览器"><svg class="s22" viewBox="0 0 22 22"><circle cx="11" cy="11" r="10.500" fill="#38b549"/><path d="M16 14a5.500 5.500 0 11.600-3H7" fill="none" stroke="#fff" stroke-width="2.500"/><path d="M2 18Q8 3 21 2" stroke="#b9e85b" fill="none"/></svg></button>
<button class="t39" aria-label="邮件"><svg class="s24" viewBox="0 0 24 24"><path d="M0 8l12-5 12 5v13H0z" fill="#fff"/><path d="M2 9h21l-10 4 5 4z" fill="#02141a"/></svg></button>
<button class="t39" aria-label="Edge"><svg class="s22" viewBox="0 0 22 22"><path d="M20 18q-5 4-11 2-6-3-4-9-3 2-4 5Q-1 1 11 1q10 0 10 11H9q2 6 11 3zM8 9h7q0-4-3-4-4 0-4 4z" fill="#0d7ad8"/></svg></button>
<button class="t37 cur" aria-label="广联达"><svg class="s24" viewBox="0 0 16 16"><use href="#app"/></svg></button>
<div class="tscroll"><svg viewBox="0 0 10 6"><path d="M1 5l4-4 4 4"/></svg><svg viewBox="0 0 10 6"><path d="M1 1l4 4 4-4"/></svg></div>
<div class="tray">
<svg class="s18" viewBox="0 0 18 18"><g fill="none" stroke="#fff" stroke-width="1.300"><circle cx="12" cy="4" r="2.500"/><circle cx="6" cy="9" r="2.500"/><path d="M2 17q0-5 4-5t4 5M10 10q3-5 6-1v3"/></g></svg>
<p class="cpu">27%<br>CPU使用</p>
<svg class="s12" viewBox="0 0 12 12"><path d="M1 9l5-5 5 5" fill="none" stroke="#fff" stroke-width="1.400"/></svg>
<svg class="s14" viewBox="0 0 14 14"><path d="M1 14Q1 2 13 1M4 14q0-8 9-9M7 14q0-5 6-5" fill="none" stroke="#ccc" stroke-width="1.300"/><circle cx="12" cy="13" r="1.500" fill="#fff"/></svg>
<svg class="s18" viewBox="0 0 18 18"><path d="M1 7h3l4-4v12l-4-4H1zM10 6q2 3 0 6M12 4q4 5 0 10M14 2q6 7 0 14" fill="none" stroke="#eee" stroke-width="1.200"/></svg>
<svg class="s24 kb" viewBox="0 0 24 16"><path d="M1 2h22v12H1z" fill="none" stroke="#fff" stroke-width="1.400"/><path d="M4 5.500h17M4 8.500h17M4 11.500h2M20 11.500h1" stroke="#fff" stroke-dasharray="1 1"/><path d="M7 11.500h12" stroke="#fff"/></svg>
<span class="ime">英</span>
<svg class="s18" viewBox="0 0 18 18"><path d="M2 3l13-2 2 13-13 3z" fill="#f1501b"/><path d="M13 5Q6 3 6 6q0 2 3 3 4 1 3 3-2 2-7 0" fill="none" stroke="#fff" stroke-width="2.300"/></svg>
<p class="clock">11:24<br>2018/11/5</p>
<span class="note"><svg viewBox="0 0 18 18"><path d="M1 1h16v12H9l-4 4v-4H1z" fill="#fff"/><path d="M4 4h10M4 7h10M4 10h7" stroke="#02141a"/></svg><b>1</b></span>
</div>
</nav>
</body>
</html>
```
FILE: styles.css
```css
*{box-sizing:border-box}
body{margin:0;height:100vh;display:flex;flex-direction:column;overflow:hidden;background:#f0f0f0;color:#000;font:12px/16px "Noto Sans","Noto Sans CJK SC",sans-serif}
button,input,select{font:inherit;color:inherit;margin:0}
h1,h2,p,ul{margin:0;padding:0;font-weight:400;font-size:12px}
svg{display:block;flex:none}
.sprite{position:absolute;width:0;height:0}
.i{width:16px;height:16px}
.m{font-family:"DejaVu Sans Mono","Noto Sans CJK SC",monospace;font-size:10px}

.title{position:relative;display:flex;align-items:center;height:23px;flex:none;background:#fff;padding-left:2px;gap:5px}
.title h1{color:#8c8c8c;white-space:nowrap}
.wins{width:120px;height:20px;margin-left:auto;margin-right:8px}
.ball{position:absolute;left:717px;top:-29px;z-index:2;width:48px;height:48px;border-radius:50%;border:2px solid #999;background:linear-gradient(#a2e8a0,#2fbd4f 75%);box-shadow:0 2px 5px #777;color:#fff;font-weight:700;line-height:67px;text-align:center}

.bar{display:flex;align-items:center;height:27px;background:linear-gradient(#fcfcfc,#f0f0f0);border-radius:2px}
.bar button{display:flex;align-items:center;gap:4px;height:23px;padding:0 3px 0 4px;border:0;background:none;white-space:nowrap;flex:none}
.bar button:disabled{color:#868686}
.bar .on{background:#e0edf8;box-shadow:inset 0 0 0 1px #0078d7}
.ar{width:6px;margin-right:-1px;border:3px solid transparent;border-top:4px solid;border-bottom:0}
.ar.wide{margin:0 1px}
.sep{width:6px;height:16px;border-left:1px solid #b6b6b6;margin-left:4px;margin-right:-4px;flex:none}
.hd{width:3px;height:15px;margin:0 1px 0 4px;flex:none;background:repeating-linear-gradient(#aaa 0 2px,transparent 2px 5px)}
.more{margin:0 5px 10px auto;font-size:14px;line-height:14px}
.row{display:flex;height:28px;flex:none;padding-top:1px}
.row.last,.row.top{padding-top:0}
.menurow{display:flex;justify-content:flex-end;height:28px;flex:none;gap:1px}
.blank{width:25px;background:linear-gradient(90deg,#fff,#f3f3f3)}
.account{width:274px}
.account .bellb{margin:0 1px 0 2px}
.std{width:152px;padding-left:1px}
.std button{padding-right:3px}
.calc{flex:1;margin-left:1px}
.view{flex:none;width:661px;margin-left:3px}
.field{background:#fff;height:23px}
.mini{width:31px;margin-left:491px;height:24px;background:#fff}
.draw{margin-left:24px}
.axis{margin-left:4px;margin-right:2px}
.combo{position:relative;width:70px;height:23px;margin-right:2px;background:#fff}
.combo.c58{width:58px}
.combo.c55{width:56px;margin-right:0}
.combo select{width:100%;height:100%;border:0;background:none;appearance:none;padding:0 14px 0 2px}
.combo::after{content:"";position:absolute;right:3px;top:10px;border:3px solid transparent;border-top:4px solid #000;border-bottom:0}

main{flex:1;display:flex;min-height:0}
aside{width:161px;margin-right:5px;display:flex;flex-direction:column;flex:none;border-right:1px solid #a0a0a0;border-left:1px solid #a0a0a0}
.phead{display:flex;justify-content:space-between;align-items:center;height:16px;margin-top:2px;border:1px solid #888;border-left:0}
.phead svg{width:30px;height:14px}
.nav{height:22px;border:1px solid #a0a0a0;border-width:0 0 1px;background:#f0f0f0;padding:0;box-shadow:inset 1px 1px #fff}
.phead + .nav{margin-top:1px;border-top:1px solid #a0a0a0;height:23px}
.ptools{height:26px;padding:4px;background:linear-gradient(#fdfdfd,#f0f0f0)}
.ptools svg{width:44px;height:20px}
.treebox{flex:1;min-height:0;display:flex;background:#fff;border:1px solid #7d8590;border-right-color:#b5b5b5;margin:1px 1px 1px 0;overflow:hidden}
.tree{list-style:none;flex:1;min-width:0;padding:1px 0 0;overflow:hidden}
.tree li{position:relative;display:flex;align-items:center;height:16px;padding-left:43px;white-space:nowrap}
.tree li .i{margin-right:4px}
.tree li::before{content:"";position:absolute;left:13px;top:0;bottom:0;width:20px;border:dotted #888;border-width:0 1px}
.tree li::after{content:"";position:absolute;left:33px;top:8px;width:9px;border-top:1px dotted #888}
.tree li.end::before{bottom:7px}
.tree li.g{padding-left:24px}
.tree li.g::before{left:7px;top:5px;bottom:auto;width:6px;height:6px;border:solid #999;border-width:1px 1px 0 0;transform:rotate(45deg)}
.tree li.o::before{left:9px;top:3px;border-color:#444;border-width:2px 2px 0 0;transform:rotate(135deg)}
.tree li.g::after{left:20px;width:3px}
.sel .lab{background:#d9d9d9;margin-left:-4px;padding-left:4px}
.bk{width:9px;height:16px}
.cadbk{margin-left:6px;width:14px}
.newtag{background:#ffd42a;font-size:11px;line-height:14px}
.vs{width:17px;flex:none;display:flex;flex-direction:column;align-items:center;justify-content:space-between;background:#f0f0f0;padding:7px 0;position:relative}
.vs svg,.tscroll svg{width:8px;height:5px}
.vs path,.hs path,.tscroll path{fill:none;stroke:#505050;stroke-width:2}
.thumb{position:absolute;top:110px;bottom:30px;left:0;width:15px;background:#cdcdcd}
.thumb.t2{top:18px;bottom:auto;height:23px}

.work{flex:1;min-width:0;display:flex;flex-direction:column;padding-right:1px}
.scene{flex:1;min-height:0;width:100%;background:#000}
.axes{font:14px "DejaVu Sans",sans-serif}
.snapbar{padding:1px 0 5px;height:33px}
.s2{margin-left:5px}
.offs{margin-left:5px}
.num{display:flex;align-items:center;color:#808080;position:relative;font-size:13px}
.num input{width:58px;height:23px;border:1px solid #7a7a7a;background:#f0f0f0;color:#808080;text-align:right;padding:0 18px 0 0;margin:0 2px;font-size:12px}
.num.deg input{width:68px}
.spin{width:6px;height:15px;margin:0 6px 0 -12px;display:flex;flex-direction:column;justify-content:space-between}
.spin::before,.spin::after{content:"";width:0;border:3px solid transparent}
.spin::before{border-top:0;border-bottom:3px solid #666}
.spin::after{border-bottom:0;border-top:3px solid #666}
.num + .num{margin-left:4px}
.chk{display:flex;align-items:center;gap:8px;margin:0 4px 0 5px}
.chk input{appearance:none;width:11px;height:11px;border:1px solid #707070;background:#fff}

.detail{display:flex;height:200px;flex:none}
.grip{width:12px;padding:1px 1px 0;background:radial-gradient(#bbb 1px,transparent 2px) 0 2px/5px 5px}
.grip svg{width:10px;height:10px}
.dmain{flex:1;min-width:0;display:flex;flex-direction:column}
.dtools{height:26px;margin-top:1px;flex:none}
.total{margin-left:8px;white-space:nowrap}
.grid{flex:1;min-height:0;border:1px solid #a0a0a0;background:#f0f0f0;display:flex;flex-direction:column;padding:0 1px}
.gbody{flex:1;min-height:0;display:flex;overflow:hidden;justify-content:space-between}
.gbody table{flex:0 1 auto;width:1196px;table-layout:fixed;border-collapse:separate;border-spacing:0;margin-right:-29px}
.gbody .vs{z-index:1}
.w33{width:33px}.w36{width:36px}.w38{width:38px}.w39{width:39px}.w49{width:49px}.w56{width:56px}.w61{width:61px}.w71{width:71px}.w73{width:73px}.w156{width:156px}.w166{width:166px}.w201{width:201px}
th,td{border:solid #b8b8b8;border-width:0 1px 1px 0;padding:0 2px;text-align:left;font-weight:400;white-space:nowrap;overflow:hidden}
thead th{height:20px;background:linear-gradient(#fff,#f0f0f0);text-align:center;padding:0}
tbody th{text-align:center;background:linear-gradient(#fff,#ececec)}
td{height:61px;background:#ccffd9}
.short td,.short th{height:30px}
td.m:not(.red),th.m{font-size:10px}
thead .hot{background:linear-gradient(#ffd58c,#f2b450);color:#600040}
tbody .hot{background:#ffd48a;color:#600040}
.act{background:#adebd9}
.k{border-right-color:#000}
.c{text-align:center;font-size:14px}
.fig{padding:0}
.fig svg{width:200px;height:60px}
.fig text{font:10px "DejaVu Sans Mono",monospace}
.red{color:red;text-align:center}
.hs{height:17px;flex:none;display:flex;align-items:center;padding:0 21px 0 5px}
.hs svg{width:5px;height:8px}
.hs i{width:814px;height:15px;background:#cdcdcd;margin:0 auto 0 7px}

.status{display:flex;gap:2px;height:21px;flex:none;margin-top:1px;background:#f4f4f4}
.status>span{display:flex;align-items:center;padding-left:1px;border:1px solid #d0d0d0;background:linear-gradient(#f5f5f5,#fcfcfc)}
.s1{width:148px}.s2c{width:78px}.s3{width:98px}.s4{width:49px}.s5{flex:1}.s6{width:70px}

.task{display:flex;height:40px;flex:none;background:#03151a;color:#fff}
.task button{border:0;background:none;padding:0;display:flex;align-items:center;justify-content:center}
.task .start{width:48px;background:#000}
.start svg{width:16px;height:16px}
.cortana{display:flex;align-items:center;width:344px;background:#f2f2f2;padding:0 15px 0 9px;gap:9px}
.cortana>svg{width:22px;height:22px}
.cortana .mic{width:12px;height:18px}
.cortana input{flex:1;min-width:0;border:0;background:none;padding:0;font-size:14px}
.cortana input::placeholder{color:#333;opacity:1}
.t48{width:48px}.t53{width:52px}.t39{width:39px}.t37{width:37px}
.t48>svg{width:18px;height:18px}
.t53>svg{width:22px;height:22px}
.task .s28{width:28px;height:28px}.task .s24{width:24px;height:24px}.task .s22{width:22px;height:22px}.s18{width:18px;height:18px}.s14{width:14px;height:14px}.s12{width:12px;height:12px}
.task .kb{height:16px}
.qs{display:flex;align-items:center;width:150px;height:30px;margin-top:5px;border:1px solid #777;background:#454545;padding:0 7px 0 3px;gap:5px}
.qs svg{width:18px;height:18px}
.qs input{flex:1;min-width:0;border:0;background:none;padding:0}
.qs input::placeholder{color:#aaa;opacity:1}
.task .run{box-shadow:inset 0 -2px #76b9ed}
.task .cur{background:#34444b;box-shadow:inset 0 -2px #76b9ed}
.tscroll{width:17px;margin-left:-1px;background:#f4f4f4;display:flex;flex-direction:column;align-items:center;justify-content:space-between;padding:7px 0 5px}
.tray{flex:1;display:flex;align-items:center;gap:9px;padding:0 22px 0 21px;text-align:center;line-height:18px}
.cpu{width:60px;margin:0 5px 0 15px}
.clock{width:64px;margin-left:4px}
.ime{font-size:14px}
.note{position:relative;margin-left:auto}
.note svg{width:18px;height:18px}
.note b{position:absolute;left:8px;top:7px;width:16px;height:16px;border-radius:50%;border:1px solid #999;background:#333;line-height:14px;font-weight:400}
```
